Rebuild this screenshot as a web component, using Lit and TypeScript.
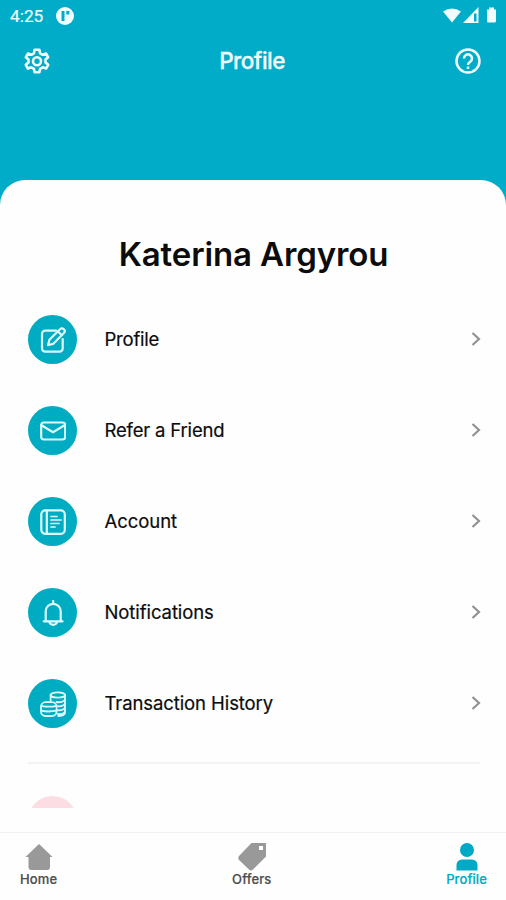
import { LitElement, html, css, svg } from "lit";
import { customElement } from "lit/decorators.js";

const icons = {
  profile: svg`<path d="M16 3.600H5.200A3.200 3.200 0 0 0 2 6.800V21.500a3.200 3.200 0 0 0 3.200 3.200H19.500A3.200 3.200 0 0 0 22.700 21.500V12"/><path d="M8 18.200l1.400-5.500L20 2.300a2.500 2.500 0 0 1 3.900 3.800L13.600 16.600z M18 4.500l3.800 3.700"/>`,
  mail: svg`<rect x="1.200" y="4.500" width="24" height="17" rx="2.500"/><path d="M1.500 7.200L13 14.300 24.500 7.200"/>`,
  account: svg`<rect x="1.300" y="1.300" width="23.500" height="23.500" rx="4"/><path d="M6.800 1.500V24.500"/><path stroke-width="1.700" d="M11 7.500h6M11 11h10M11 14.500h8M11 18h4"/>`,
  bell: svg`<path d="M13.200 1v2.500M3.800 21.300h18.800M5.700 21V11.300a7.500 7.500 0 0 1 15 0V21"/><path d="M9.500 21.800a3.700 3 0 0 0 7.400 0"/>`,
  coins: svg`<g stroke-width="1.800"><ellipse cx="17.800" cy="4" rx="7.200" ry="2.700"/><path d="M10.600 4v5.500M25 4v18c0 1.700-3.200 3-6.800 3M25 8c0 3-6 3.600-8.500 3M25 12c0 2.500-4 3.600-7 3.200M25 16c0 2.500-4 3.600-7 3.200M25 20c0 2.300-3.500 3.300-7 3"/><rect x="1" y="11.200" width="15.600" height="13.800" rx="4.500"/><path d="M1.500 14.800c4 1.200 11 1.200 14.600 0M1 19.700c4 .9 11 .9 15.600 0"/></g>`,
};

const rows = [
  { label: "Profile", icon: icons.profile, cls: "l1" },
  { label: "Refer a Friend", icon: icons.mail, cls: "l2" },
  { label: "Account", icon: icons.account, cls: "l3" },
  { label: "Notifications", icon: icons.bell, cls: "l4" },
  { label: "Transaction History", icon: icons.coins, cls: "l5" },
];

@customElement("app-root")
export class AppRoot extends LitElement {
  static styles = css`
    :host { display: flex; flex-direction: column; height: 900px; background: #00acc7; font-family: Inter, "Liberation Sans", sans-serif; color: #0c0c0c; overflow: hidden; }
    * { box-sizing: border-box; }
    svg { display: block; fill: none; flex: none; }
    .status { display: flex; align-items: center; height: 32px; padding: 0 7px 0 10px; color: #f2fdff; font: 400 17.300px Roboto, sans-serif; }
    .time { -webkit-text-stroke: .2px; }
    .brand { margin-left: 13px; }
    .signals { margin-left: auto; }
    .bar { display: grid; grid-template-columns: 28px 1fr 28px; align-items: center; height: 58px; padding: 0 24px 0 23px; color: #f2fdff; }
    .title { text-align: center; font-size: 22.500px; font-weight: 500; letter-spacing: -.55px; -webkit-text-stroke: .3px; padding: 0 1px 2px 0; }
    .card { margin-top: 90px; height: 653px; flex: none; background: #fefefe; border-radius: 25px 25px 0 0; }
    .clip { height: 628px; overflow: hidden; padding: 50px 26px 0 28px; }
    .name { margin: 0; height: 48px; line-height: 48px; text-align: center; font-size: 33px; font-weight: 600; letter-spacing: -.13px; padding-right: 1px; }
    .list { padding-top: 16px; }
    .row { display: flex; align-items: center; height: 91px; }
    .disc { display: grid; place-items: center; width: 49px; height: 49px; border-radius: 50%; background: #00acc2; color: #dcfaff; margin-right: 27.500px; }
    .label { flex: 1; font-size: 18.500px; font-weight: 400; -webkit-text-stroke: .2px; padding-bottom: 2px; }
    .l1 { letter-spacing: -.22px; }
    .l2 { letter-spacing: -.18px; }
    .l3 { letter-spacing: -.05px; }
    .l4 { letter-spacing: -.08px; }
    .l5 { letter-spacing: -.09px; }
    .chevron { margin: 0 -.5px 1px 0; }
    .divider { height: 2px; background: #f2f3f4; margin-top: 13px; }
    .pink { width: 49px; height: 49px; border-radius: 50%; background: #fcdde4; margin-top: 32px; }
    .nav { display: flex; justify-content: space-between; height: 68px; flex: none; margin-top: -1px; border-top: 1px solid #f2f2f2; background: #fefefe; padding: 9px 19px 0 20px; }
    .tab { display: flex; flex-direction: column; align-items: center; color: #4d4d4d; font-size: 13px; line-height: 15px; font-weight: 500; -webkit-text-stroke: .2px; }
    .home { letter-spacing: .15px; }
    .offers { letter-spacing: .12px; }
    .active { color: #00a9c4; letter-spacing: .1px; }
  `;

  render() {
    return html`
      <div class="status"><span class="time">4:25</span>
        <svg class="brand" width="18" height="18" viewBox="0 0 18 18"><circle cx="9" cy="9" r="9" fill="currentColor"/><path d="M5.500 4h3v10h-3zM10.300 4h3v3.500h-3z" fill="#00acc7"/></svg>
        <svg class="signals" width="57" height="18" viewBox="0 0 57 18" fill="currentColor"><path fill="currentColor" d="M1 4.500Q10 -1.500 19 4.500L10 15.500z"/><path fill="currentColor" fill-rule="evenodd" d="M21 16L36.500 0V16zM32 6.500V14.500H34.500V6.500z"/><path fill="currentColor" d="M45 2.500h2V.500h5v2h2V14a1.500 1.500 0 0 1-1.500 1.500h-6A1.500 1.500 0 0 1 45 14z"/></svg>
      </div>
      <div class="bar">
        <svg width="28" height="28" viewBox="0 0 28 28" stroke="currentColor" stroke-width="2.600" stroke-linejoin="round"><path d="M11.600 2.800h4.800l.7 3.500 2.600 1.500 3.400-1.200 2.100 3.700-2.700 2.300v2.900l2.700 2.300-2.100 3.700-3.400-1.200-2.600 1.500-.7 3.500h-4.800l-.7-3.500-2.600-1.500-3.400 1.200-2.100-3.700 2.700-2.300v-2.900l-2.700-2.300 2.100-3.700 3.400 1.200 2.600-1.500z"/><circle cx="14" cy="14.200" r="4"/></svg>
        <span class="title">Profile</span>
        <svg width="28" height="28" viewBox="0 0 28 28" stroke="currentColor" stroke-width="2.500"><circle cx="14" cy="14" r="11.500"/><path d="M10 11.500a4 4 0 1 1 6.200 3.200c-1.500 1-2.200 1.600-2.200 3.300M14 19.500v2.400"/></svg>
      </div>
      <main class="card"><div class="clip">
        <h1 class="name">Katerina Argyrou</h1>
        <div class="list">${rows.map(r => html`
          <div class="row"><span class="disc"><svg width="26" height="26" viewBox="0 0 26 26" stroke="currentColor" stroke-width="2.200" stroke-linejoin="round" stroke-linecap="round">${r.icon}</svg></span>
            <span class="label ${r.cls}">${r.label}</span>
            <svg class="chevron" width="10" height="16" viewBox="0 0 10 16" stroke="#929292" stroke-width="2.200"><path d="M1.500 2L8 8l-6.500 6"/></svg></div>`)}
        </div>
        <div class="divider"></div>
        <div class="pink"></div>
      </div></main>
      <nav class="nav">
        <div class="tab home"><svg width="28" height="30" viewBox="0 0 28 30"><path fill="#999" d="M14 2L27.500 15H25v10a3 3 0 0 1-3 3H6.500a3 3 0 0 1-3-3V15H.500z"/></svg>Home</div>
        <div class="tab offers"><svg width="28" height="30" viewBox="0 0 28 30"><path fill="#999" fill-rule="evenodd" d="M13.500 1H28v13.500L15 27.500q-2 2-4 0L1 18q-1.500-2 0-4zM21 4v4h4V4z"/></svg>Offers</div>
        <div class="tab active"><svg width="28" height="30" viewBox="0 0 28 30"><circle cx="14" cy="8" r="7" fill="currentColor"/><path fill="currentColor" d="M3.500 28.500V23a5.500 5.500 0 0 1 5.500-5.500h10a5.500 5.500 0 0 1 5.500 5.500v5.500z"/></svg>Profile</div>
      </nav>`;
  }
}
